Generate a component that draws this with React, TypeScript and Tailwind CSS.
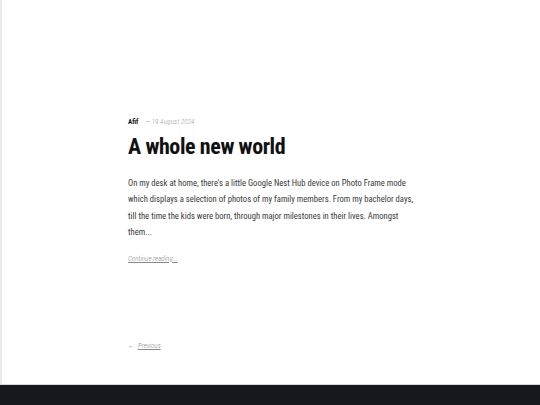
export default function App() {
  return (
    <div className="flex h-[405px] w-[540px] flex-col overflow-hidden bg-white">
      <main className="flex h-[384px] flex-col border-l-2 border-[#ececec] pl-[126px] pt-[117px] font-['Roboto_Condensed','Roboto',sans-serif]">
        <div className="w-[290px]">
          <div className="flex items-center gap-[7px] text-[7px] leading-[10px]">
            <span className="font-bold text-[#111]">Afif</span>
            <span className="font-light italic tracking-[0.1px] text-[#9a9a9a]">— 19 August 2024</span>
          </div>
          <h1 className="mt-[5px] text-[22px] font-bold leading-[30px] tracking-[-0.4px] text-[#111]">
            A whole new world
          </h1>
          <p className="mt-[13px] w-[286px] text-[8.6px] leading-[16.4px] text-[#3a3a3a]">
            On my desk at home, there's a little Google Nest Hub device on Photo Frame mode which displays a selection of photos of my family members. From my bachelor days, till the time the kids were born, through major milestones in their lives. Amongst them...
          </p>
          <a className="mt-[13px] block text-[7px] font-light italic leading-[10px] text-[#888] underline">Continue reading...</a>
        </div>
        <div className="mt-[77px] flex items-center gap-[3px] text-[7px] leading-[10px] text-[#888]">
          <span>←</span>
          <span className="font-light italic underline">Previous</span>
        </div>
      </main>
      <div className="h-px bg-[#d8d8dc]" />
      <footer className="flex-1 bg-[#17181d]" />
    </div>
  );
}
